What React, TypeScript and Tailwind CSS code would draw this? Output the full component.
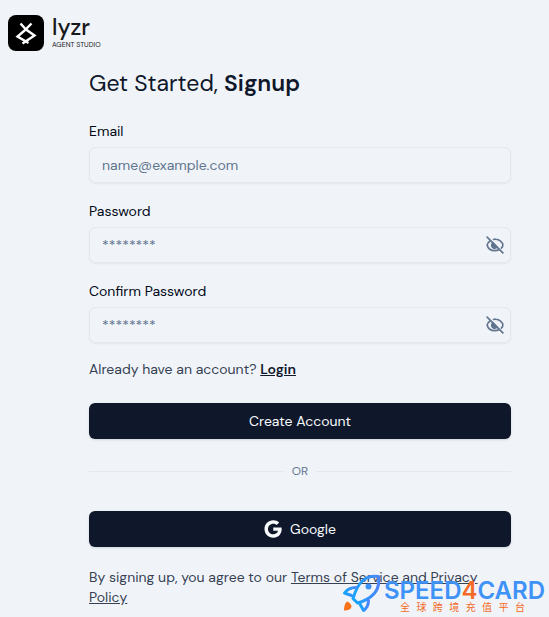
import { useState } from "react";

interface FieldProps {
  id: string;
  label: string;
  type: string;
  placeholder: string;
}

function LyzrMark() {
  return (
    <svg viewBox="0 0 36 36" className="size-9" fill="none" aria-hidden="true">
      <rect width="36" height="36" rx="8" fill="#000" />
      <g stroke="#fff" strokeWidth="2.4">
        <path d="M12.5 8.5L18 14.5L26.5 20.5L14.5 28.5" />
        <path d="M23.5 8.5L16 16L9.5 21.500L20.5 28" />
      </g>
    </svg>
  );
}

function EyeOffIcon() {
  return (
    <svg
      viewBox="0 0 24 24"
      className="size-[18px]"
      fill="none"
      stroke="currentColor"
      strokeWidth="2.2"
      strokeLinecap="round"
      strokeLinejoin="round"
      aria-hidden="true"
    >
      <path d="M9.2 9.2a4 4 0 1 0 5.600 5.600z" fill="currentColor" />
      <path d="M10 4.6C11 4.3 12 4.2 13 4.3c5 .3 9 3.7 9.5 7.7 0 1.500-.7 2.900-2 4.200" />
      <path d="M5.5 6.6C3.2 8 1.5 10 1.5 12c1 4.500 5 7.500 10.500 7.500 2 0 3.700-.4 5.200-1.200" />
      <path d="M1.5 1.500l21 21" />
    </svg>
  );
}

function GoogleIcon() {
  return (
    <svg viewBox="2 2 20.5 20" className="size-[18px]" fill="currentColor" aria-hidden="true">
      <path d="M12.545 10.239v3.821h5.445c-.712 2.315-2.647 3.972-5.445 3.972-3.332 0-6.033-2.701-6.033-6.032s2.701-6.032 6.033-6.032c1.498 0 2.866.549 3.921 1.453l2.814-2.814C17.503 2.988 15.139 2 12.545 2 7.021 2 2.543 6.477 2.543 12s4.478 10 10.002 10c8.396 0 10.249-7.850 9.426-11.748z" />
    </svg>
  );
}

function Rocket() {
  return (
    <svg viewBox="0 0 40 40" className="size-10" fill="none" aria-hidden="true">
      <defs>
        <linearGradient id="hull" x1="0" y1="0" x2="1" y2="0">
          <stop stopColor="#16a5fa" />
          <stop offset="1" stopColor="#4a86fb" />
        </linearGradient>
      </defs>
      <g stroke="url(#hull)" strokeWidth="3" strokeLinejoin="round" strokeLinecap="round">
        <path d="M36.5 3.5C23 2 16 9 11 25.5L15.5 30C31 25.5 38.5 17 36.5 3.5Z" />
        <path d="M14 14.5C8.5 14.5 5 16.5 2.5 20L9.5 22.5" />
        <path d="M26.5 27.5C26.5 32 25 35 21.5 37.5L18 31" />
      </g>
      <circle cx="26.5" cy="13.5" r="3" fill="#3f92f8" />
      <path d="M5 28.5C2.5 30.5 2 34 2 37.5C6 37.5 9 36.5 9.5 33.5C9.5 31.5 7 29 5 28.5Z" fill="#f9731a" />
    </svg>
  );
}

function Field({ id, label, type, placeholder }: FieldProps) {
  const [visible, setVisible] = useState(false);
  const isPassword = type === "password";

  return (
    <div>
      <label htmlFor={id} className="block text-sm leading-5 text-[#020817]">
        {label}
      </label>
      <div className="relative mt-1.5">
        <input
          id={id}
          type={isPassword && visible ? "text" : type}
          placeholder={placeholder}
          className="block h-9 w-full rounded-md border border-slate-200 bg-transparent px-3 text-sm shadow-xs placeholder:text-slate-500 focus:outline-none focus:border-slate-400"
        />
        {isPassword && (
          <button
            type="button"
            aria-label="Toggle password visibility"
            onClick={() => setVisible(!visible)}
            className="absolute inset-y-0 right-[7px] flex items-center text-slate-500"
          >
            <EyeOffIcon />
          </button>
        )}
      </div>
    </div>
  );
}

export default function App() {
  return (
    <div className="relative min-h-screen bg-[#f0f4f9] font-['DM_Sans','Inter',sans-serif]">
      <header className="flex items-center gap-2 px-2 pt-[15px]">
        <LyzrMark />
        <div className="text-[#18181b]">
          <div className="text-[23px] leading-5 font-medium">lyzr</div>
          <div className="mt-1 text-[7px] leading-2">AGENT STUDIO</div>
        </div>
      </header>

      <main className="pt-4 pr-[38px] pl-[89px]">
        <h1 className="text-[23px] leading-8 text-slate-900">
          Get Started, <span className="font-semibold">Signup</span>
        </h1>

        <form className="mt-[22px]" onSubmit={(e) => e.preventDefault()}>
          <div className="space-y-[18px]">
            <Field id="email" label="Email" type="email" placeholder="name@example.com" />
            <Field id="password" label="Password" type="password" placeholder="********" />
            <Field id="confirm" label="Confirm Password" type="password" placeholder="********" />
          </div>
          <p className="mt-4 text-sm leading-5 text-gray-700">
            Already have an account?{" "}
            <a href="#login" className="font-semibold text-slate-900 underline">
              Login
            </a>
          </p>
          <button
            type="submit"
            className="mt-6 h-9 w-full rounded-md bg-slate-900 text-sm text-slate-50 shadow-sm"
          >
            Create Account
          </button>
        </form>

        <div className="mt-6 mb-8 flex items-center gap-2 text-xs leading-4 text-slate-500">
          <span className="h-px flex-1 bg-slate-200" />
          OR
          <span className="h-px flex-1 bg-slate-200" />
        </div>

        <button
          type="button"
          className="flex h-9 w-full items-center justify-center gap-2 rounded-md bg-slate-900 text-sm text-slate-50 shadow-sm"
        >
          <GoogleIcon />
          Google
        </button>

        <p className="mt-5 text-sm leading-5 text-gray-700">
          By signing up, you agree to our{" "}
          <a href="#terms" className="underline">
            Terms of Service and Privacy Policy
          </a>
        </p>
      </main>

      {/* Sponsor stamp over the page corner */}
      <div className="pointer-events-none absolute right-1 bottom-1 flex items-end gap-0.5">
        <Rocket />
        <div className="text-center">
          <div className="font-['Inter',sans-serif] text-2xl leading-5 font-semibold text-[#3f92f8]">
            SPEED<span className="text-[#f46a26]">4</span>CARD
          </div>
          <div className="flex justify-between pr-5 pl-4 font-['Noto_Sans_CJK_SC',sans-serif] text-[10px] leading-3 text-[#f46a26]">
            {[..."全球跨境充值平台"].map((char) => (
              <span key={char}>{char}</span>
            ))}
          </div>
        </div>
      </div>
    </div>
  );
}
